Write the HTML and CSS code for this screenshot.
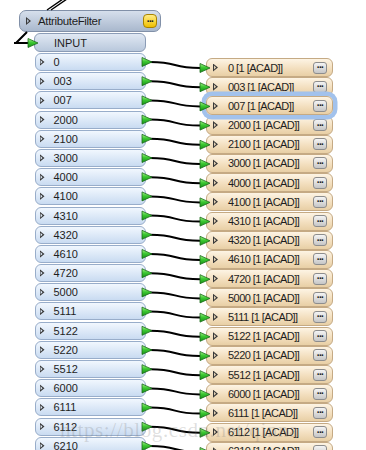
FILE: index.html
```html
<!DOCTYPE html>
<html lang="en">
<head>
    <meta charset="UTF-8">
    <title>AttributeFilter</title>
    <link rel="stylesheet" href="styles.css">
</head>
<body>
    <div class="diagram">
        <!-- transformer -->
        <div class="filter">
            <div class="filter-head">
                <span class="tog"></span>
                <span class="title">AttributeFilter</span>
                <span class="more yellow">...</span>
            </div>
            <div class="in">INPUT</div>
            <div class="outs">
                <div class="out"><span class="tog"></span>0</div>
                <div class="out"><span class="tog"></span>003</div>
                <div class="out"><span class="tog"></span>007</div>
                <div class="out"><span class="tog"></span>2000</div>
                <div class="out"><span class="tog"></span>2100</div>
                <div class="out"><span class="tog"></span>3000</div>
                <div class="out"><span class="tog"></span>4000</div>
                <div class="out"><span class="tog"></span>4100</div>
                <div class="out"><span class="tog"></span>4310</div>
                <div class="out"><span class="tog"></span>4320</div>
                <div class="out"><span class="tog"></span>4610</div>
                <div class="out"><span class="tog"></span>4720</div>
                <div class="out"><span class="tog"></span>5000</div>
                <div class="out"><span class="tog"></span>5111</div>
                <div class="out"><span class="tog"></span>5122</div>
                <div class="out"><span class="tog"></span>5220</div>
                <div class="out"><span class="tog"></span>5512</div>
                <div class="out"><span class="tog"></span>6000</div>
                <div class="out"><span class="tog"></span>6111</div>
                <div class="out"><span class="tog"></span>6112</div>
                <div class="out"><span class="tog"></span>6210</div>
            </div>
        </div>

        <!-- writer feature types -->
        <div class="types">
            <div class="type"><span class="tog"></span><span class="name">0 [1 [ACAD]]</span><span class="more">...</span></div>
            <div class="type"><span class="tog"></span><span class="name">003 [1 [ACAD]]</span><span class="more">...</span></div>
            <div class="type selected"><span class="tog"></span><span class="name">007 [1 [ACAD]]</span><span class="more">...</span></div>
            <div class="type"><span class="tog"></span><span class="name">2000 [1 [ACAD]]</span><span class="more">...</span></div>
            <div class="type"><span class="tog"></span><span class="name">2100 [1 [ACAD]]</span><span class="more">...</span></div>
            <div class="type"><span class="tog"></span><span class="name">3000 [1 [ACAD]]</span><span class="more">...</span></div>
            <div class="type"><span class="tog"></span><span class="name">4000 [1 [ACAD]]</span><span class="more">...</span></div>
            <div class="type"><span class="tog"></span><span class="name">4100 [1 [ACAD]]</span><span class="more">...</span></div>
            <div class="type"><span class="tog"></span><span class="name">4310 [1 [ACAD]]</span><span class="more">...</span></div>
            <div class="type"><span class="tog"></span><span class="name">4320 [1 [ACAD]]</span><span class="more">...</span></div>
            <div class="type"><span class="tog"></span><span class="name">4610 [1 [ACAD]]</span><span class="more">...</span></div>
            <div class="type"><span class="tog"></span><span class="name">4720 [1 [ACAD]]</span><span class="more">...</span></div>
            <div class="type"><span class="tog"></span><span class="name">5000 [1 [ACAD]]</span><span class="more">...</span></div>
            <div class="type"><span class="tog"></span><span class="name">5111 [1 [ACAD]]</span><span class="more">...</span></div>
            <div class="type"><span class="tog"></span><span class="name">5122 [1 [ACAD]]</span><span class="more">...</span></div>
            <div class="type"><span class="tog"></span><span class="name">5220 [1 [ACAD]]</span><span class="more">...</span></div>
            <div class="type"><span class="tog"></span><span class="name">5512 [1 [ACAD]]</span><span class="more">...</span></div>
            <div class="type"><span class="tog"></span><span class="name">6000 [1 [ACAD]]</span><span class="more">...</span></div>
            <div class="type"><span class="tog"></span><span class="name">6111 [1 [ACAD]]</span><span class="more">...</span></div>
            <div class="type"><span class="tog"></span><span class="name">6112 [1 [ACAD]]</span><span class="more">...</span></div>
            <div class="type"><span class="tog"></span><span class="name">6210 [1 [ACAD]]</span><span class="more">...</span></div>
        </div>

        <!-- connections and ports -->
        <svg class="wires" width="366" height="450" viewBox="0 0 366 450">
            <defs>
                <linearGradient id="green" x1="0" y1="0" x2="0" y2="1">
                    <stop offset="0" stop-color="#a6f58a"/>
                    <stop offset="0.45" stop-color="#3cc832"/>
                    <stop offset="1" stop-color="#169216"/>
                </linearGradient>
                <polygon id="port" points="0,-4.5 10,0 0,4.5" fill="url(#green)" stroke="#1c6b1c" stroke-width="0.8"/>
                <g id="link">
                    <path d="M150 0C180 0 170 6 200 6" fill="none" stroke="#000" stroke-width="2"/>
                    <use href="#port" x="142"/>
                    <use href="#port" x="200" y="6"/>
                </g>
            </defs>
            <path d="M47 10L63 -1M51 10L67 -1" stroke="#000" stroke-width="1.4"/>
            <path d="M14 43H30M16 43L27 32" fill="none" stroke="#000" stroke-width="2"/>
            <use href="#port" x="28" y="43"/>
            <use href="#link" y="62"/>
            <use href="#link" y="81.2"/>
            <use href="#link" y="100.4"/>
            <use href="#link" y="119.6"/>
            <use href="#link" y="138.8"/>
            <use href="#link" y="158"/>
            <use href="#link" y="177.2"/>
            <use href="#link" y="196.4"/>
            <use href="#link" y="215.6"/>
            <use href="#link" y="234.8"/>
            <use href="#link" y="254"/>
            <use href="#link" y="273.2"/>
            <use href="#link" y="292.4"/>
            <use href="#link" y="311.6"/>
            <use href="#link" y="330.8"/>
            <use href="#link" y="350"/>
            <use href="#link" y="369.2"/>
            <use href="#link" y="388.4"/>
            <use href="#link" y="407.6"/>
            <use href="#link" y="426.8"/>
            <use href="#link" y="446"/>
        </svg>

        <div class="mark">https://blog.csdn.net/qinna</div>
    </div>
</body>
</html>
```

FILE: styles.css
```css
html,body{
    margin: 0;
    padding: 0;
    background-color: #fff;
}
.diagram{
    position: relative;
    width: 366px;
    height: 450px;
    overflow: hidden;
    font-family: "Liberation Sans", Arial, sans-serif;
    font-size: 11px;
    color: #1e1e1e;
}
.tog{
    flex: none;
    width: 5px;
    height: 8px;
    background-color: #3a3a3a;
    clip-path: path(evenodd, "M0 0L5 4L0 8ZM1.1 2.1L3 4L1.1 5.9Z");
}
.more{
    flex: none;
    box-sizing: border-box;
    width: 14px;
    height: 12px;
    display: flex;
    align-items: center;
    justify-content: center;
    padding-bottom: 5px;
    font-size: 10px;
    font-weight: bold;
    line-height: 1;
    letter-spacing: -0.6px;
    color: #1a1a1a;
    border: 1px solid #8d8d8d;
    border-radius: 3px;
    background: linear-gradient(#f4f4f4, #c6c6c6);
}
.more.yellow{
    height: 14px;
    border-radius: 4px;
    border-color: #a88300;
    background: linear-gradient(#ffec85, #f0c000);
}

/* transformer */
.filter{
    position: absolute;
    left: 19px;
    top: 10px;
    width: 142px;
    display: flex;
    flex-direction: column;
    align-items: center;
    gap: 1px;
}
.filter-head{
    box-sizing: border-box;
    width: 100%;
    height: 22px;
    display: flex;
    align-items: center;
    padding: 0 3px 0 6px;
    border: 1px solid #8190a8;
    border-radius: 7px;
    background: linear-gradient(#d6dfec, #a9b8cd);
    font-size: 11.5px;
    letter-spacing: -0.35px;
}
.filter-head .title{
    flex: 1;
    margin-left: 7px;
}
.in{
    box-sizing: border-box;
    width: 112px;
    height: 19px;
    display: flex;
    align-items: center;
    padding-left: 19px;
    border: 1px solid #8b9cb6;
    border-radius: 6px;
    background: linear-gradient(#e0e8f3, #b9c8dc);
}
.outs{
    display: flex;
    flex-direction: column;
    gap: 1.2px;
}
.out{
    box-sizing: border-box;
    width: 111px;
    height: 18px;
    display: flex;
    align-items: center;
    gap: 9px;
    padding-left: 4px;
    border: 1px solid #98adca;
    border-radius: 6px;
    background: linear-gradient(#f1f7fe, #c9dbf1);
}

/* feature types */
.types{
    position: absolute;
    left: 206px;
    top: 58px;
    width: 127px;
    display: flex;
    flex-direction: column;
    gap: 0.2px;
}
.type{
    box-sizing: border-box;
    height: 19px;
    display: flex;
    align-items: center;
    padding: 0 5px 0 6px;
    border: 1px solid #c5aa84;
    border-radius: 6px;
    background: linear-gradient(#fdf4e4, #f3dfbf 55%, #e8cfa5);
    letter-spacing: -0.55px;
}
.type .name{
    flex: 1;
    margin-left: 10px;
}
.type.selected{
    position: relative;
    z-index: 1;
    box-shadow: 0 0 0 4.5px #a2c2ec;
}

.wires{
    position: absolute;
    left: 0;
    top: 0;
    z-index: 2;
    pointer-events: none;
}
.mark{
    position: absolute;
    left: 60px;
    top: 418px;
    z-index: 3;
    font-family: "Liberation Serif", serif;
    font-size: 21px;
    letter-spacing: 0.6px;
    color: rgba(110, 110, 110, 0.22);
    pointer-events: none;
}
```
